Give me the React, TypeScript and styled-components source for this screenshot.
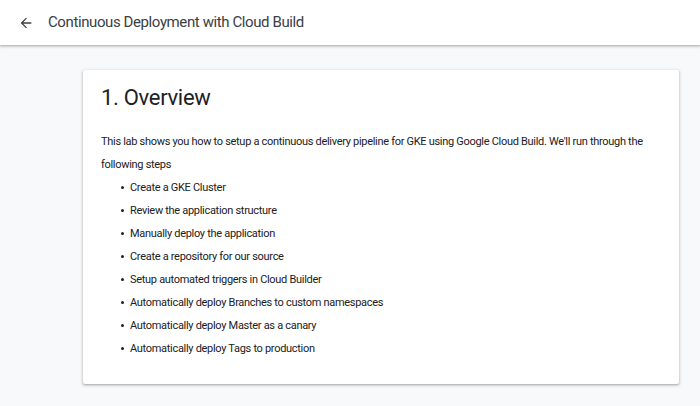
import styled, { createGlobalStyle } from "styled-components";

const GlobalStyle = createGlobalStyle`
  html, body {
    margin: 0;
    padding: 0;
    background: #f8f9fa;
    font-family: Roboto, "Liberation Sans", Arial, sans-serif;
    color: #202124;
  }
`;

const Page = styled.div`
  width: 700px;
  height: 406px;
  overflow: hidden;
  display: flex;
  flex-direction: column;
`;

const TopBar = styled.header`
  height: 45px;
  background: #fff;
  display: flex;
  align-items: center;
  gap: 14px;
  padding: 0 17px 0 18px;
  box-shadow: 0 1px 2px rgba(60, 64, 67, 0.3), 0 1px 3px 1px rgba(60, 64, 67, 0.15);
  position: relative;
  z-index: 1;
  flex-shrink: 0;
`;

const BackButton = styled.button`
  width: 16px;
  height: 16px;
  padding: 0;
  border: 0;
  background: none;
  display: flex;
  align-items: center;
  justify-content: center;
  color: #3c4043;
`;

const TopTitle = styled.h1`
  margin: 0 0 1px;
  font-family: Roboto, "Liberation Sans", sans-serif;
  font-size: 15px;
  font-weight: 400;
  letter-spacing: -0.4px;
  color: #3c4043;
`;

const Main = styled.main`
  flex: 1;
  padding: 25px 21px 0 83px;
`;

const Card = styled.section`
  width: 596px;
  height: 314px;
  box-sizing: border-box;
  background: #fff;
  border-radius: 2px;
  box-shadow: 0 1px 2px rgba(60, 64, 67, 0.3), 0 1px 3px 1px rgba(60, 64, 67, 0.15);
  padding: 14px 18px;
`;

const Heading = styled.h2`
  margin: 0 0 18px;
  font-family: Roboto, "Liberation Sans", sans-serif;
  font-size: 22px;
  font-weight: 400;
  line-height: 28px;
  letter-spacing: -0.3px;
  color: #202124;
`;

const Para = styled.p`
  margin: 0;
  font-size: 11px;
  line-height: 23px;
  letter-spacing: -0.3px;
  color: #202124;
`;

const Steps = styled.ul`
  margin: 0;
  padding: 0 0 0 29px;
  list-style: none;
`;

const Step = styled.li`
  font-size: 11px;
  line-height: 23px;
  letter-spacing: -0.3px;
  color: #202124;
  position: relative;
  &::before {
    content: "";
    position: absolute;
    left: -9px;
    top: 10px;
    width: 3px;
    height: 3px;
    border-radius: 50%;
    background: #202124;
  }
`;

const steps = [
  "Create a GKE Cluster",
  "Review the application structure",
  "Manually deploy the application",
  "Create a repository for our source",
  "Setup automated triggers in Cloud Builder",
  "Automatically deploy Branches to custom namespaces",
  "Automatically deploy Master as a canary",
  "Automatically deploy Tags to production",
];

export default function App() {
  return (
    <Page>
      <GlobalStyle />
      <TopBar>
        <BackButton aria-label="Back">
          <svg width="16" height="16" viewBox="0 0 24 24" fill="currentColor">
            <path d="M20 11H7.83l5.59-5.59L12 4l-8 8 8 8 1.41-1.41L7.83 13H20v-2z" />
          </svg>
        </BackButton>
        <TopTitle>Continuous Deployment with Cloud Build</TopTitle>
      </TopBar>
      <Main>
        <Card>
          <Heading>1. Overview</Heading>
          <Para>
            This lab shows you how to setup a continuous delivery pipeline for GKE using Google
            Cloud Build. We'll run through the following steps
          </Para>
          <Steps>
            {steps.map((s) => (
              <Step key={s}>{s}</Step>
            ))}
          </Steps>
        </Card>
      </Main>
    </Page>
  );
}
